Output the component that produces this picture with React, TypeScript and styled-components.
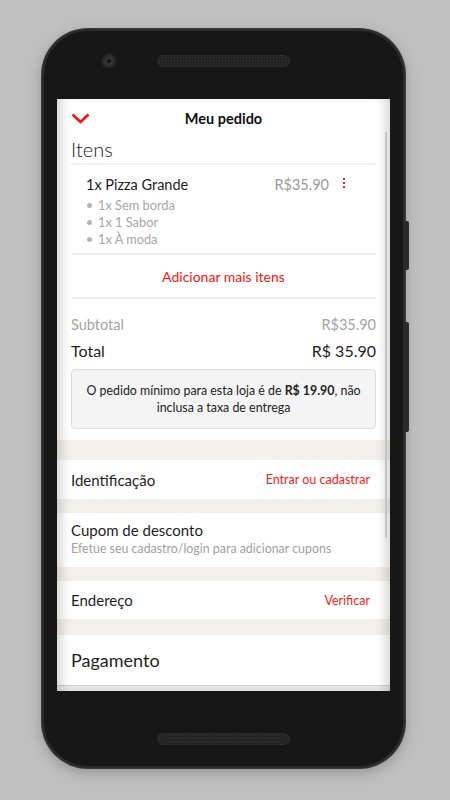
import React from "react";
import styled, { createGlobalStyle } from "styled-components";

const Global = createGlobalStyle`
  html, body { margin: 0; padding: 0; background: #c0c0c0; }
  body { font-family: Lato, "Open Sans", sans-serif; }
  * { box-sizing: border-box; }
`;

const Stage = styled.div`
  width: 450px;
  height: 800px;
  padding: 29px 0 0 42px;
  background: #c0c0c0;
  overflow: hidden;
`;

const Phone = styled.div`
  position: relative;
  width: 363px;
  height: 739px;
  border-radius: 46px;
  background: #171717;
  border: 2px solid #2c2c2c;
  box-shadow: 0 0 0 1px #3a3a3a, 0 4px 14px rgba(0, 0, 0, 0.25);
  display: flex;
  flex-direction: column;
  align-items: center;
`;

const SideButton = styled.div<{ $top: number; $h: number }>`
  position: absolute;
  right: -6px;
  top: ${(p) => p.$top}px;
  width: 4px;
  height: ${(p) => p.$h}px;
  background: #2b2929;
  border-radius: 0 2px 2px 0;
`;

const TopBezel = styled.div`
  width: 100%;
  height: 68px;
  display: flex;
  align-items: center;
  padding: 0 0 8px 59px;
`;

const Camera = styled.div`
  width: 12px;
  height: 12px;
  border-radius: 50%;
  background: radial-gradient(circle, #1a1a1a 0 2px, #3a3a3a 3px, #2a2a2a 5px);
  box-shadow: 0 0 0 1px #2e2e2e;
`;

const Speaker = styled.div<{ $ml?: number }>`
  width: 133px;
  height: 12px;
  margin-left: ${(p) => p.$ml ?? 0}px;
  border-radius: 6px;
  background-color: #242424;
  background-image: radial-gradient(#333 0.8px, transparent 1px);
  background-size: 3px 3px;
  border: 1px solid #2c2c2c;
`;

const Screen = styled.div`
  position: relative;
  width: 333px;
  height: 592px;
  flex-shrink: 0;
  background: #fff;
  overflow: hidden;
  display: flex;
  flex-direction: column;
  font-family: Lato, "Open Sans", sans-serif;
  color: #1f1f1f;
  &::after {
    content: "";
    position: absolute;
    inset: 0;
    pointer-events: none;
    box-shadow: inset 12px 0 12px -8px rgba(0, 0, 0, 0.18),
      inset -12px 0 12px -8px rgba(0, 0, 0, 0.18);
  }
`;

const Header = styled.div`
  height: 39px;
  flex-shrink: 0;
  display: grid;
  grid-template-columns: 40px 1fr 40px;
  align-items: center;
  padding: 0 0 0 14px;
`;

const HeaderTitle = styled.div`
  text-align: center;
  font-weight: 700;
  font-size: 14.5px;
  color: #111;
  padding-right: 14px;
`;

const Scroller = styled.div`
  flex: 1;
  display: flex;
  flex-direction: column;
  overflow: hidden;
`;

const ScrollThumb = styled.div`
  position: absolute;
  right: 3px;
  top: 33px;
  width: 2px;
  height: 406px;
  background: #c4c4c4;
  z-index: 2;
`;

const Section = styled.div<{ $pad?: string }>`
  background: #fff;
  padding: ${(p) => p.$pad ?? "0 14px"};
  flex-shrink: 0;
`;

const SectionTitle = styled.div`
  height: 27px;
  font-size: 20px;
  font-weight: 300;
  line-height: 22px;
  color: #222;
  border-bottom: 2px solid #f0f0f0;
`;

const ItemBlock = styled.div`
  padding: 9px 17px 5px 15px;
  border-bottom: 2px solid #f0f0f0;
`;

const ItemRow = styled.div`
  display: flex;
  align-items: center;
  height: 20px;
`;

const ItemName = styled.div`
  flex: 1;
  font-size: 14.5px;
  color: #1c1c1c;
`;

const ItemPrice = styled.div`
  font-size: 14.5px;
  color: #9a9a9a;
`;

const Kebab = styled.div`
  width: 30px;
  display: flex;
  flex-direction: column;
  align-items: center;
  gap: 2px;
  padding-bottom: 3px;
  span {
    width: 2px;
    height: 2px;
    background: #ff1a1a;
  }
`;

const SubList = styled.ul`
  list-style: none;
  margin: 3px 0 0;
  padding: 0;
`;

const SubItem = styled.li`
  height: 17px;
  line-height: 17px;
  font-size: 12.8px;
  color: #a5a5a5;
  display: flex;
  align-items: center;
  &::before {
    content: "";
    width: 5px;
    height: 5px;
    border-radius: 50%;
    background: #b5b5b5;
    margin: 0 6px 0 1px;
  }
`;

const AddMore = styled.div`
  height: 44px;
  display: flex;
  align-items: center;
  justify-content: center;
  font-size: 14px;
  color: #ff1010;
  border-bottom: 2px solid #f0f0f0;
`;

const TotalsRow = styled.div<{ $strong?: boolean }>`
  display: flex;
  justify-content: space-between;
  align-items: center;
  height: 26px;
  font-size: ${(p) => (p.$strong ? "16px" : "14.5px")};
  color: ${(p) => (p.$strong ? "#1e1e1e" : "#a3a3a3")};
`;

const Totals = styled.div`
  padding-top: 12px;
`;

const Notice = styled.div`
  margin: 6px 0 11px;
  height: 60px;
  border: 1px solid #dedede;
  border-radius: 4px;
  background: #f4f4f4;
  display: flex;
  flex-direction: column;
  align-items: center;
  justify-content: center;
  text-align: center;
  padding: 0 10px;
  font-size: 12.4px;
  line-height: 17px;
  color: #222;
`;

const NoticeLine = styled.div``;

const Strong = styled.strong`
  font-weight: 700;
`;

const Band = styled.div<{ $h: number }>`
  height: ${(p) => p.$h}px;
  background: #f4f0ec;
  flex-shrink: 0;
`;

const LinkRow = styled.div<{ $h: number }>`
  height: ${(p) => p.$h}px;
  display: flex;
  align-items: center;
  justify-content: space-between;
  padding: 0 20px 0 14px;
  background: #fff;
  flex-shrink: 0;
`;

const RowLabel = styled.div<{ $size?: number; $light?: boolean }>`
  font-size: ${(p) => p.$size ?? 15}px;
  font-weight: ${(p) => (p.$light ? 300 : 400)};
  color: #1e1e1e;
`;

const RowAction = styled.div`
  font-size: 12.5px;
  color: #ff1a1a;
`;

const StackRow = styled.div`
  height: 54px;
  padding: 8px 14px 0;
  background: #fff;
  flex-shrink: 0;
  display: flex;
  flex-direction: column;
  gap: 2px;
`;

const Hint = styled.div`
  font-size: 12.4px;
  color: #a0a0a0;
`;

const FooterEdge = styled.div`
  margin-top: auto;
  height: 6px;
  flex-shrink: 0;
  border-top: 1px solid #cfcfcf;
  background: #e6e6e6;
`;

const BottomBezel = styled.div`
  flex: 1;
  width: 100%;
  display: flex;
  align-items: center;
  justify-content: center;
  padding-top: 21px;
`;

const Chevron = () => (
  <svg width="19" height="11" viewBox="0 0 19 11">
    <path d="M1.5 1.5 L9.5 9 L17.5 1.5" fill="none" stroke="#ff1010" strokeWidth="2.6" />
  </svg>
);

export default function App() {
  return (
    <>
      <Global />
      <Stage>
        <Phone>
          <SideButton $top={190} $h={49} />
          <SideButton $top={291} $h={110} />
          <TopBezel>
            <Camera />
            <Speaker $ml={42} />
          </TopBezel>
          <Screen>
            <ScrollThumb />
            <Header>
              <Chevron />
              <HeaderTitle>Meu pedido</HeaderTitle>
              <span />
            </Header>
            <Scroller>
              <Section>
                <SectionTitle>Itens</SectionTitle>
                <ItemBlock>
                  <ItemRow>
                    <ItemName>1x Pizza Grande</ItemName>
                    <ItemPrice>R$35.90</ItemPrice>
                    <Kebab>
                      <span />
                      <span />
                      <span />
                    </Kebab>
                  </ItemRow>
                  <SubList>
                    <SubItem>1x Sem borda</SubItem>
                    <SubItem>1x 1 Sabor</SubItem>
                    <SubItem>1x À moda</SubItem>
                  </SubList>
                </ItemBlock>
                <AddMore>Adicionar mais itens</AddMore>
                <Totals>
                  <TotalsRow>
                    <span>Subtotal</span>
                    <span>R$35.90</span>
                  </TotalsRow>
                  <TotalsRow $strong>
                    <span>Total</span>
                    <span>R$ 35.90</span>
                  </TotalsRow>
                </Totals>
                <Notice>
                  <NoticeLine>
                    O pedido mínimo para esta loja é de <Strong>R$ 19.90</Strong>, não
                  </NoticeLine>
                  <NoticeLine>inclusa a taxa de entrega</NoticeLine>
                </Notice>
              </Section>
              <Band $h={20} />
              <LinkRow $h={39}>
                <RowLabel>Identificação</RowLabel>
                <RowAction>Entrar ou cadastrar</RowAction>
              </LinkRow>
              <Band $h={14} />
              <StackRow>
                <RowLabel>Cupom de desconto</RowLabel>
                <Hint>Efetue seu cadastro/login para adicionar cupons</Hint>
              </StackRow>
              <Band $h={14} />
              <LinkRow $h={38}>
                <RowLabel>Endereço</RowLabel>
                <RowAction>Verificar</RowAction>
              </LinkRow>
              <Band $h={16} />
              <LinkRow $h={49}>
                <RowLabel $size={18}>Pagamento</RowLabel>
              </LinkRow>
              <FooterEdge />
            </Scroller>
          </Screen>
          <BottomBezel>
            <Speaker />
          </BottomBezel>
        </Phone>
      </Stage>
    </>
  );
}
